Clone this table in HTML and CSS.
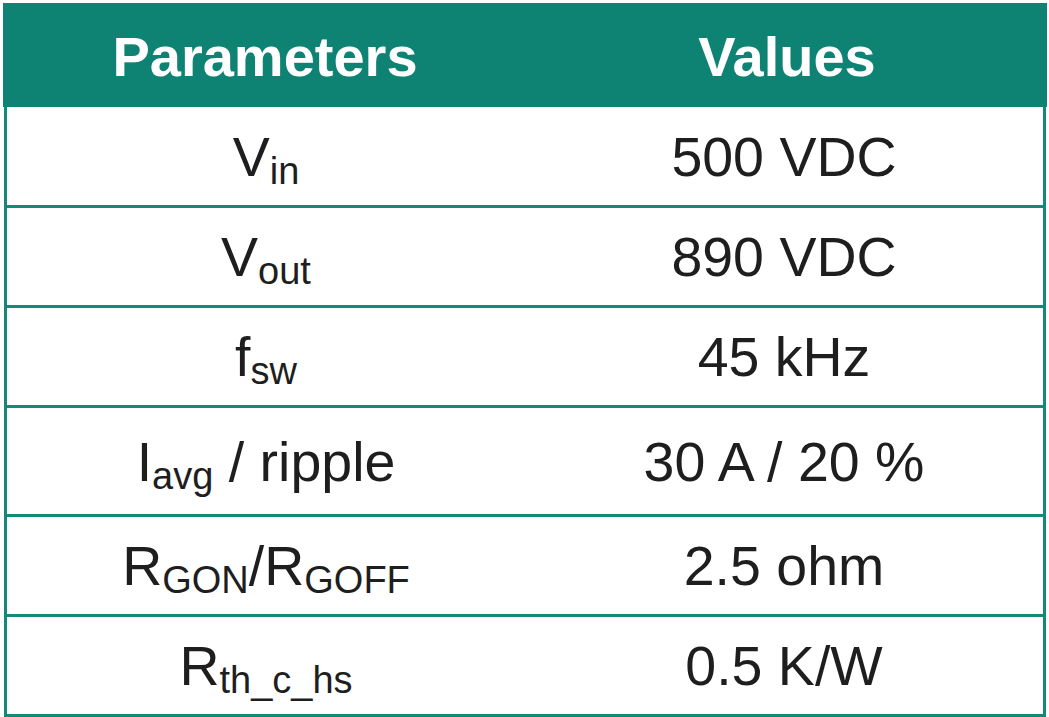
FILE: index.html
```html
<!DOCTYPE html>
<html>
<head>
<meta charset='utf-8' />
<title>Parameters</title>
<link rel="stylesheet" href="styles.css">
</head>
<body>
<div class="params">
  <div class="head">
    <div class="cell">Parameters</div>
    <div class="cell">Values</div>
  </div>
  <div class="rows">
    <div class="row">
      <div class="cell">V<span class="sub">in</span></div>
      <div class="cell">500 VDC</div>
    </div>
    <div class="row">
      <div class="cell">V<span class="sub">out</span></div>
      <div class="cell">890 VDC</div>
    </div>
    <div class="row">
      <div class="cell">f<span class="sub">sw</span></div>
      <div class="cell">45 kHz</div>
    </div>
    <div class="row tall">
      <div class="cell">I<span class="sub">avg</span> / ripple</div>
      <div class="cell">30 A / 20 %</div>
    </div>
    <div class="row">
      <div class="cell">R<span class="sub">GON</span>/R<span class="sub">GOFF</span></div>
      <div class="cell">2.5 ohm</div>
    </div>
    <div class="row">
      <div class="cell">R<span class="sub">th_c_hs</span></div>
      <div class="cell">0.5 K/W</div>
    </div>
  </div>
</div>
</body>
</html>
```

FILE: styles.css
```css
body {
  margin: 0;
  padding: 3px 0 0 3px;
  background: #fff;
  font-family: "Liberation Sans", Arial, sans-serif;
  color: #1e1e1e;
}
.params {
  width: 1044px;
}
.head {
  display: flex;
  height: 104px;
  background-color: #0e8373;
  color: #fff;
  font-weight: bold;
  font-size: 56px;
}
.rows {
  margin-left: 1px;
  width: 1036px;
  border: 3px solid #13897a;
  border-top: none;
}
.row {
  display: flex;
  height: 98px;
  font-size: 55.5px;
  border-bottom: 3px solid #13897a;
}
.row + .row {
  height: 97px;
}
.row.tall {
  height: 106px;
}
.row:last-child {
  border-bottom: none;
}
.head .cell {
  padding-left: 2px;
}
.cell {
  flex: 1;
  display: flex;
  align-items: center;
  justify-content: center;
  padding-top: 3px;
  line-height: 1;
  white-space: pre;
}
.sub {
  font-size: 38px;
  position: relative;
  top: 13px;
}
```
